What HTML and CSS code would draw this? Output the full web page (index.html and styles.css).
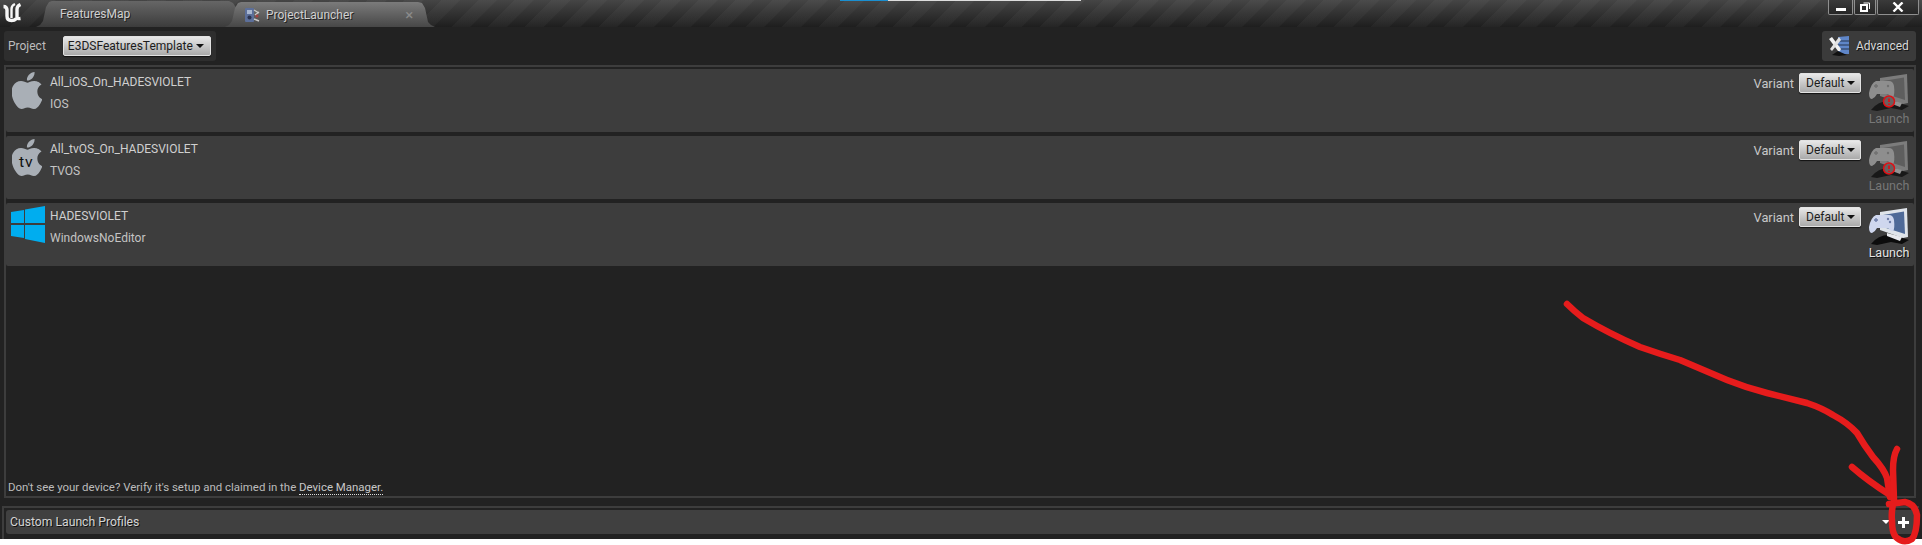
FILE: index.html
```html
<!DOCTYPE html>
<html lang="en">
<head>
    <meta charset="UTF-8">
    <title>ProjectLauncher</title>
    <link rel="stylesheet" href="styles.css">
</head>
<body>
    <svg width="0" height="0" class="defs">
        <defs>
            <path id="apple" d="M12.152 6.896c-.948 0-2.415-1.078-3.96-1.04-2.04.027-3.91 1.183-4.961 3.014-2.117 3.675-.546 9.103 1.519 12.09 1.013 1.454 2.208 3.09 3.792 3.039 1.52-.065 2.09-.987 3.935-.987 1.831 0 2.35.987 3.96.948 1.637-.026 2.676-1.48 3.676-2.948 1.156-1.688 1.636-3.325 1.662-3.415-.039-.013-3.182-1.221-3.22-4.857-.026-3.04 2.48-4.494 2.597-4.559-1.429-2.09-3.623-2.324-4.39-2.376-2-.156-3.675 1.09-4.61 1.09zM15.53 3.83c.843-1.012 1.4-2.427 1.245-3.83-1.207.052-2.662.805-3.532 1.818-.78.896-1.454 2.338-1.273 3.714 1.338.104 2.715-.688 3.559-1.701"/>
            <g id="launch-off">
                <path d="M11 4 L38 0 L39 29 L34 30 L11 22 Z" fill="#7c7c7c"/>
                <path d="M14 7 L35 3.500 L36 26 L14 19 Z" fill="#5e5e5e"/>
                <path d="M2 36 Q9 27 20 27 L26 31 L30 29 L40 32 L33 36 L22 34 L8 37 Z" fill="#181818"/>
                <path d="M18 25 L33 29 L31 33 L18 28 Z" fill="#929292"/>
                <path d="M7 7 Q2 9 0 19 Q0 25 3 25 Q6 24 8 20 L19 20 Q22 24 24 23 Q26 21 25 12 Q24 7 20 7 Z" fill="#8e8e8e"/>
                <path d="M5 12 H9 M7 10 V14" stroke="#707070" stroke-width="1.400"/>
                <circle cx="19" cy="12" r="1.200" fill="#707070"/>
            </g>
            <g id="launch-alert">
                <circle cx="20" cy="27.500" r="5.500" fill="#6a6060" stroke="#e00f14" stroke-width="1.500"/>
                <path d="M20 24.500 V28 M20 29.500 V31" stroke="#e00f14" stroke-width="1.700"/>
            </g>
        </defs>
    </svg>

    <div class="app">
        <!-- barra de titulo -->
        <header class="titlebar">
            <div class="progress"><span class="progress-blue"></span><span class="progress-white"></span></div>
            <svg class="ue-logo" width="22" height="22" viewBox="0 0 22 22" fill="none" stroke="#f6f6f6">
                <path d="M2.500 5.500 Q6 5.500 6 9 V15 Q6 19.500 10.500 19.500 Q13.500 19.500 15.500 17.500" stroke-width="3.400"/>
                <path d="M14 3 Q10.500 4.500 10.500 8 V17" stroke-width="2.400"/>
                <path d="M19.500 3.500 Q16 5 16 8 V16 Q16 18 19.500 17.500" stroke-width="3.400"/>
            </svg>
            <div class="tab tab-level"><span class="tab-label">FeaturesMap</span></div>
            <div class="tab tab-active">
                <svg class="tab-icon" width="16" height="16" viewBox="0 0 16 16">
                    <rect x="1" y="1" width="9" height="14" rx="1" fill="#5c6f9a"/>
                    <rect x="3" y="3" width="5" height="4" fill="#a8b6d0"/>
                    <circle cx="5.500" cy="10.500" r="2" fill="#2b3350"/>
                    <path d="M10 3 L15 6 M11 8 L15 5 M10 12 L15 14" stroke="#c9c9c9" stroke-width="1.400"/>
                    <circle cx="13" cy="9" r="1.500" fill="#a54040"/>
                </svg>
                <span class="tab-label">ProjectLauncher</span>
                <span class="tab-close">×</span>
            </div>
            <div class="window-buttons">
                <div class="win-btn win-min"><span class="min-glyph"></span></div>
                <div class="win-btn win-max">
                    <svg width="10" height="10" viewBox="0 0 10 10" fill="none" stroke="#fff">
                        <path d="M3.500 1 H9.500 V7" stroke-width="1"/>
                        <rect x="1" y="3" width="6" height="6" stroke-width="2"/>
                    </svg>
                </div>
                <div class="win-btn win-close">
                    <svg width="12" height="10" viewBox="0 0 12 10"><path d="M1.500 .5 L10.500 9.500 M10.500 .5 L1.500 9.500" stroke="#fff" stroke-width="2.400"/></svg>
                </div>
            </div>
        </header>

        <!-- barra de proyecto -->
        <div class="toolbar">
            <div class="project-box">
                <span class="project-label">Project</span>
                <div class="combo combo-project">E3DSFeaturesTemplate<span class="caret"></span></div>
            </div>
            <div class="advanced-btn">
                <svg width="20" height="20" viewBox="0 0 20 20">
                    <path d="M9 1 L20 0 V18 H9 Z" fill="#5f86c8"/>
                    <path d="M9 5 H20 M9 9 H20 M9 13 H20" stroke="#26344e" stroke-width="1"/>
                    <path d="M0 3 L3 1 L12 13 L11 15 L9 15 Z" fill="#f2f2f2"/>
                    <path d="M10 1 L12 4 L3 15 L1 13 Z" fill="#e2e2e2"/>
                    <path d="M3 19 L9 15 L18 19 L10 20 Z" fill="#111"/>
                </svg>
                <span>Advanced</span>
            </div>
        </div>

        <!-- lista de dispositivos -->
        <section class="devices">
            <div class="device-row">
                <svg class="device-icon" width="30" height="37" viewBox="2.500 0 19 24" preserveAspectRatio="none"><use href="#apple" fill="#a9afb6"/></svg>
                <div class="device-text">
                    <div class="device-name">All_iOS_On_HADESVIOLET</div>
                    <div class="device-platform">IOS</div>
                </div>
                <div class="variant">
                    <span class="variant-label">Variant</span>
                    <div class="combo combo-variant">Default<span class="caret"></span></div>
                </div>
                <div class="launch launch-off">
                    <svg width="40" height="37" viewBox="0 0 40 37">
                        <use href="#launch-off"/>
                        <use href="#launch-alert"/>
                    </svg>
                    <span>Launch</span>
                </div>
            </div>

            <div class="device-row">
                <svg class="device-icon" width="30" height="37" viewBox="2.500 0 19 24" preserveAspectRatio="none">
                    <use href="#apple" fill="#a9afb6"/>
                    <text x="7" y="18.400" class="tv-text">tv</text>
                </svg>
                <div class="device-text">
                    <div class="device-name">All_tvOS_On_HADESVIOLET</div>
                    <div class="device-platform">TVOS</div>
                </div>
                <div class="variant">
                    <span class="variant-label">Variant</span>
                    <div class="combo combo-variant">Default<span class="caret"></span></div>
                </div>
                <div class="launch launch-off">
                    <svg width="40" height="37" viewBox="0 0 40 37">
                        <use href="#launch-off"/>
                        <use href="#launch-alert"/>
                    </svg>
                    <span>Launch</span>
                </div>
            </div>

            <div class="device-row">
                <svg class="device-icon win-icon" width="34" height="37" viewBox="0 0 34 37">
                    <path d="M0 6 L13 4 V17 H0 Z M14 3.500 L34 0 V17 H14 Z M0 19 H13 V32 L0 30 Z M14 19 H34 V37 L14 33 Z" fill="#00adef"/>
                </svg>
                <div class="device-text">
                    <div class="device-name">HADESVIOLET</div>
                    <div class="device-platform">WindowsNoEditor</div>
                </div>
                <div class="variant">
                    <span class="variant-label">Variant</span>
                    <div class="combo combo-variant">Default<span class="caret"></span></div>
                </div>
                <div class="launch">
                    <svg width="40" height="37" viewBox="0 0 40 37">
                        <path d="M11 4 L38 0 L39 29 L34 30 L11 22 Z" fill="#dfe4ea"/>
                        <path d="M14 7 L35 3.500 L36 26 L14 19 Z" fill="#4f6a98"/>
                        <path d="M2 36 Q9 27 20 27 L26 31 L30 29 L40 32 L33 36 L22 34 L8 37 Z" fill="#0c0c0c"/>
                        <path d="M18 25 L33 29 L31 33 L18 28 Z" fill="#e8eaee"/>
                        <path d="M7 7 Q2 9 0 19 Q0 25 3 25 Q6 24 8 20 L19 20 Q22 24 24 23 Q26 21 25 12 Q24 7 20 7 Z" fill="#cfd7ee"/>
                        <path d="M5 12 H9 M7 10 V14" stroke="#6f7ea8" stroke-width="1.400"/>
                        <circle cx="19" cy="11" r="1.200" fill="#6f7ea8"/>
                        <circle cx="21" cy="14" r="1.200" fill="#6f7ea8"/>
                    </svg>
                    <span>Launch</span>
                </div>
            </div>

            <p class="device-note">Don't see your device? Verify it's setup and claimed in the <span class="note-link">Device Manager.</span></p>
        </section>

        <!-- perfiles -->
        <section class="profiles">
            <div class="profiles-row">
                <span class="profiles-title">Custom Launch Profiles</span>
                <span class="caret caret-white"></span>
                <span class="plus"></span>
            </div>
        </section>
    </div>

    <!-- anotacion roja sobre la captura -->
    <svg class="scribble" width="1922" height="545" viewBox="0 0 1922 545">
        <path d="M1567 304 Q1574 311 1583 318 Q1610 334 1640 347 Q1660 354 1680 360 L1727 380 Q1747 388 1767 393 L1807 403 Q1822 408 1833 415 Q1848 423 1857 433 Q1864 445 1873 457 Q1884 469 1887 478 L1890 497"/>
        <path d="M1852 467 Q1868 481 1890 495"/>
        <path d="M1897 449 Q1893 456 1893 470 L1894 500 Q1891 512 1892 520 Q1892 535 1897 538 Q1904 544 1912 539 Q1917 533 1917 515 Q1915 504 1905 502 L1889 504"/>
    </svg>
</body>
</html>
```

FILE: styles.css
```css
* {
    box-sizing: border-box;
}

html, body {
    margin: 0;
    padding: 0;
    overflow: hidden;
}

body {
    position: relative;
    width: 1922px;
    height: 545px;
    background-color: #fff;
    font-family: 'Roboto', 'Liberation Sans', sans-serif;
    font-size: 12px;
    color: #c8c8c8;
}

.defs {
    position: absolute;
}

.app {
    height: 539px;
    background-color: #222;
    display: flex;
    flex-direction: column;
}

/* Barra de titulo */
.titlebar {
    position: relative;
    height: 27px;
    display: flex;
    align-items: flex-end;
    padding-left: 36px;
    background:
        repeating-linear-gradient(135deg, rgba(255, 255, 255, 0.03) 0, rgba(255, 255, 255, 0.03) 13px, transparent 14px, transparent 26px),
        linear-gradient(#454545, #1e1e1e);
}

.progress {
    position: absolute;
    top: 0;
    left: 840px;
    display: flex;
    height: 1px;
}

.progress-blue {
    width: 48px;
    background-color: #1b8fd0;
}

.progress-white {
    width: 193px;
    background-color: #ddd;
}

.ue-logo {
    position: absolute;
    top: 1px;
    left: 1px;
}

.tab {
    display: flex;
    align-items: center;
    color: #d0d0d0;
}

.tab-level {
    width: 201px;
    height: 26px;
    padding-left: 24px;
    background: linear-gradient(#666, #3c3c3c);
    clip-path: polygon(0 100%, 4px 24px, 7px 20px, 10px 6px, 13px 1px, 16px 0, 193px 0, 197px 2px, 201px 8px, 201px 100%);
}

.tab-active {
    width: 210px;
    height: 25px;
    margin-left: -12px;
    padding-left: 19px;
    background: linear-gradient(#7b7b7b, #474747);
    clip-path: polygon(0 100%, 4px 23px, 7px 19px, 10px 6px, 13px 1px, 16px 0, 193px 0, 197px 1px, 200px 6px, 203px 20px, 206px 23px, 100% 100%);
}

.tab-label {
    text-shadow: 1px 1px 0 #222;
}

.tab-icon {
    margin-right: 6px;
}

.tab-close {
    margin-left: 52px;
    font-size: 15px;
    color: #8b8b8b;
}

.window-buttons {
    position: absolute;
    top: 0;
    left: 1828px;
    display: flex;
    gap: 1px;
    height: 15px;
}

.win-btn {
    display: flex;
    align-items: center;
    justify-content: center;
    border: 1px solid #8f8f8f;
    border-top: none;
    border-radius: 0 0 2px 2px;
    background: linear-gradient(#3a3a3a, #262626);
}

.win-min {
    width: 25px;
}

.win-max {
    width: 22px;
}

.win-close {
    width: 42px;
}

.min-glyph {
    width: 10px;
    height: 3px;
    margin-top: 4px;
    background-color: #fff;
}

/* Barra de proyecto */
.toolbar {
    height: 38px;
    padding: 4px 6px 4px 4px;
    display: flex;
    justify-content: space-between;
}

.project-box {
    width: 212px;
    display: flex;
    align-items: center;
    gap: 17px;
    padding-left: 4px;
    background-color: #2e2e2e;
    border-radius: 3px;
}

.project-label {
    color: #bdbdbd;
}

.combo {
    height: 20px;
    display: flex;
    align-items: center;
    gap: 3px;
    border: 1px solid #e2e2e2;
    border-radius: 2px;
    background: linear-gradient(#e8e8e8, #aaa);
    color: #1c1c1c;
    box-shadow: 0 1px 1px #111;
}

.combo-project {
    width: 148px;
    padding-left: 4px;
}

.caret {
    width: 0;
    height: 0;
    border-left: 4.500px solid transparent;
    border-right: 4.500px solid transparent;
    border-top: 4.500px solid #111;
}

.advanced-btn {
    width: 94px;
    display: flex;
    align-items: center;
    gap: 7px;
    padding-left: 7px;
    background-color: #3b3b3b;
    border-radius: 3px;
    color: #d8d8d8;
    text-shadow: 1px 1px 0 #111;
}

/* Lista de dispositivos */
.devices {
    height: 433px;
    margin: 0 6px 0 4px;
    padding-top: 2px;
    display: flex;
    flex-direction: column;
    gap: 4px;
    border: 2px solid #3d3d3d;
}

.device-row {
    height: 63px;
    padding: 2px 5px 0 6px;
    display: flex;
    gap: 8px;
    background-color: #3d3d3d;
    border-radius: 2px;
}

.device-icon {
    flex: none;
    margin-top: 1px;
}

.win-icon {
    margin: 1px -3px 0 -1px;
}

.tv-text {
    font-family: 'Roboto', sans-serif;
    font-size: 10px;
    letter-spacing: 0.5px;
    fill: #111;
}

.device-text {
    flex: 1;
    padding-top: 4px;
}

.device-name {
    line-height: 14px;
    margin-bottom: 8px;
    color: #d0d0d0;
}

.device-platform {
    line-height: 14px;
    color: #c4c4c4;
}

.variant {
    display: flex;
    gap: 5px;
    height: 20px;
    margin-top: 2px;
    align-items: center;
}

.variant-label {
    font-size: 12.800px;
    color: #c8c8c8;
}

.combo-variant {
    width: 62px;
    padding-left: 6px;
}

.launch {
    width: 40px;
    padding-top: 3px;
    display: flex;
    flex-direction: column;
    align-items: center;
    font-size: 12.500px;
    line-height: 16px;
    color: #e4e4e4;
    text-shadow: 1px 1px 0 #111;
}

.launch svg {
    flex: none;
}

.launch-off {
    color: #777;
    text-shadow: none;
}

.device-note {
    margin: auto 0 0;
    padding: 0 0 2px 2px;
    font-size: 11.450px;
    line-height: 14px;
    color: #bcbcbc;
}

.note-link {
    border-bottom: 1px dotted #ddd;
    color: #c8c8c8;
}

/* Perfiles */
.profiles {
    flex: 1;
    margin: 8px 3px 0 2px;
    padding: 2px 2px 5px;
    border-top: 2px solid #3d3d3d;
    border-left: 2px solid #3d3d3d;
}

.profiles-row {
    height: 24px;
    padding: 0 8px 0 4px;
    display: flex;
    align-items: center;
    background-color: #404040;
    border-radius: 3px;
}

.profiles-title {
    flex: 1;
    font-size: 12.200px;
    color: #d4d4d4;
    text-shadow: 1px 1px 0 #111;
}

.caret-white {
    border-top-color: #fff;
    margin-right: 8px;
}

.plus {
    width: 11px;
    height: 11px;
    background:
        linear-gradient(#fff, #fff) center / 100% 3px no-repeat,
        linear-gradient(#fff, #fff) center / 3px 100% no-repeat;
}

/* Anotacion */
.scribble {
    position: absolute;
    top: 0;
    left: 0;
    pointer-events: none;
}

.scribble path {
    fill: none;
    stroke: #e61c1c;
    stroke-width: 6.500;
    stroke-linecap: round;
    stroke-linejoin: round;
}
```
